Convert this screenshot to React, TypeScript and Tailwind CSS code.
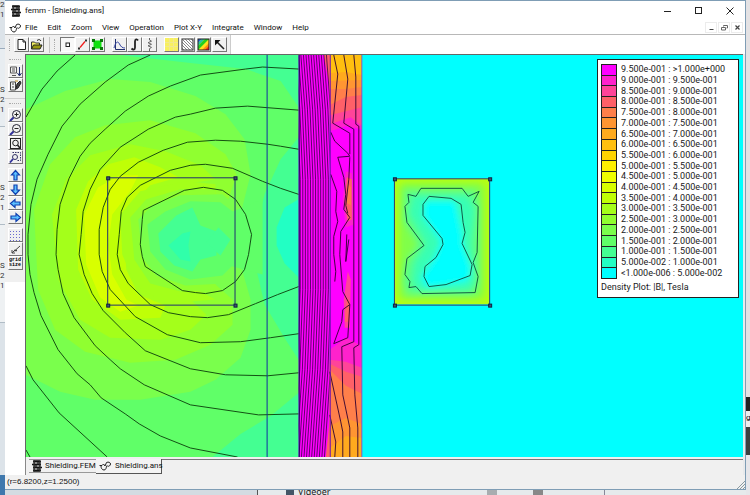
import React from "react";

type Pt = string;

const MENUS = ["File", "Edit", "Zoom", "View", "Operation", "Plot X-Y", "Integrate", "Window", "Help"];

const LEGEND: { color: string; label: string }[] = [
  { color: "#ff00ff", label: "9.500e-001 : >1.000e+000" },
  { color: "#ff22cc", label: "9.000e-001 : 9.500e-001" },
  { color: "#ff4499", label: "8.500e-001 : 9.000e-001" },
  { color: "#ff6068", label: "8.000e-001 : 8.500e-001" },
  { color: "#ff7f4a", label: "7.500e-001 : 8.000e-001" },
  { color: "#ff9532", label: "7.000e-001 : 7.500e-001" },
  { color: "#ffaa1e", label: "6.500e-001 : 7.000e-001" },
  { color: "#ffbf10", label: "6.000e-001 : 6.500e-001" },
  { color: "#ffd400", label: "5.500e-001 : 6.000e-001" },
  { color: "#fff000", label: "5.000e-001 : 5.500e-001" },
  { color: "#f0ff00", label: "4.500e-001 : 5.000e-001" },
  { color: "#d8ff00", label: "4.000e-001 : 4.500e-001" },
  { color: "#bfff06", label: "3.500e-001 : 4.000e-001" },
  { color: "#a4ff1a", label: "3.000e-001 : 3.500e-001" },
  { color: "#90ff30", label: "2.500e-001 : 3.000e-001" },
  { color: "#7aff4c", label: "2.000e-001 : 2.500e-001" },
  { color: "#60ff68", label: "1.500e-001 : 2.000e-001" },
  { color: "#44ff92", label: "1.000e-001 : 1.500e-001" },
  { color: "#22ffc4", label: "5.000e-002 : 1.000e-001" },
  { color: "#00ffff", label: "<1.000e-006 : 5.000e-002" },
];

const COIL_BANDS: { color: string; pts: Pt }[] = [
  { color: "#44ff92", pts: "26,56 298,56 298,457 26,457" },
  { color: "#60ff68", pts: "26,56 120,56 190,64 245,70 280,82 298,108 298,138 280,160 264,195 256,225 254,262 264,305 285,340 298,360 298,393 270,416 240,434 212,457 26,457" },
  { color: "#7aff4c", pts: "26,110 65,92 110,80 150,83 195,97 225,115 244,140 250,175 240,215 240,265 250,300 250,330 240,358 215,380 190,392 140,400 95,400 60,392 26,375" },
  { color: "#90ff30", pts: "34,210 50,165 75,138 105,126 150,121 195,134 225,155 236,175 228,200 215,200 190,205 180,280 215,285 232,300 232,325 210,345 175,360 130,363 85,352 55,330 38,290" },
  { color: "#a4ff1a", pts: "52,215 66,180 90,156 130,145 165,152 200,166 215,180 190,184 150,192 150,290 190,300 206,315 190,330 160,340 110,338 80,320 58,280" },
  { color: "#bfff06", pts: "76,210 88,182 108,165 134,158 160,168 178,178 150,186 132,205 124,235 126,270 138,295 165,306 160,318 120,320 92,300 78,270" },
  { color: "#d8ff00", pts: "84,215 98,188 120,176 138,176 130,192 112,215 108,245 112,275 126,300 138,306 120,312 100,298 86,265" },
  { color: "#a4ff1a", pts: "120,215 140,192 185,182 215,185 215,195 180,198 150,215 148,265 160,285 200,292 215,300 165,304 135,285 122,255" },
  { color: "#90ff30", pts: "130,218 146,200 180,190 215,190 215,290 180,292 150,284 134,260" },
  { color: "#7aff4c", pts: "138,220 152,206 180,196 222,195 240,210 240,268 225,284 185,286 156,276 142,258" },
  { color: "#60ff68", pts: "147,225 165,212 190,202 220,203 236,215 236,262 222,276 190,280 165,270 150,252" },
  { color: "#60ff68", pts: "225,215 262,200 262,275 225,265" },
  { color: "#44ff92", pts: "158,234 176,216 192,208 200,226 216,232 216,256 200,260 192,272 174,266 160,252" },
  { color: "#30ffaa", pts: "168,246 182,234 190,232 188,246 190,262 180,260" },
  { color: "#44ff92", pts: "218,228 230,240 220,256 206,243" },
  { color: "#22ffc4", pts: "298,200 284,208 276,228 276,246 284,264 298,278" },
];

const FLUX_LINES: Pt[] = [
  "26,118 42,90 57,72 75,56",
  "150,56 128,66 105,83 80,105 62,127 48,155 37,180 31,205 28,235 28,255 30,275 34,293 41,316 58,350 77,374 90,385 101,398 125,414 139,424 160,436 190,448 237,457",
  "298,70 262,68 245,70 200,76 170,87 148,97 125,112 105,130 90,144 80,157 69,179 60,205 57,230 56,255 58,270 63,294 74,318 95,346 110,360 120,369 144,385 190,405 258,415 298,414",
  "298,111 247,107 215,109 190,115 175,118 148,130 120,148 100,170 90,190 83,212 81,235 79,255 84,275 92,294 103,311 125,333 145,351 190,369 225,375 267,376 298,373",
  "298,150 280,147 267,145 240,142 215,141 187,143 163,151 138,163 120,177 110,190 103,208 99,230 99,255 102,272 110,290 135,317 167,335 200,343 240,342 270,338 298,334",
  "298,195 280,189 262,182 232,169 205,165 190,166 170,171 140,186 127,198 121,212 119,235 117,255 120,270 128,284 150,305 168,313 190,317 207,318 228,315 255,304 277,295 298,287",
  "203,188 184,191 143,211 142,220 140,245 142,257 145,267 182,291 195,293 205,294 222,291 235,282 244,270 248,255 251,235 245,215 235,200 222,191 203,188",
  "26,366 33,380 59,413 107,457",
  "26,450 30,457",
];

const SHIELD_BANDS: { color: string; pts: Pt }[] = [
  { color: "#ff00ff", pts: "329,56 361,56 361,457 329,457" },
  { color: "#ff22cc", pts: "329,56 361,56 361,130 345,127 329,132" },
  { color: "#ff4499", pts: "329,56 361,56 361,127 350,118 329,125" },
  { color: "#ff6068", pts: "329,56 361,56 361,108 345,112 329,116" },
  { color: "#ff7f4a", pts: "329,56 361,56 361,96 345,98 329,106" },
  { color: "#ff9532", pts: "329,56 361,56 361,88 345,90 329,90" },
  { color: "#ffaa1e", pts: "329,56 361,56 361,81 329,82" },
  { color: "#ffbf10", pts: "329,56 361,56 361,76 345,73 329,74" },
  { color: "#ff22cc", pts: "329,350 345,338 361,346 361,457 329,457" },
  { color: "#ff4499", pts: "329,360 345,362 361,368 361,457 329,457" },
  { color: "#ff6068", pts: "329,364 345,372 361,377 361,457 329,457" },
  { color: "#ff7f4a", pts: "329,370 345,386 361,394 361,457 329,457" },
  { color: "#ff9532", pts: "329,426 345,418 361,424 361,457 329,457" },
  { color: "#ffaa1e", pts: "329,448 345,436 361,438 361,457 329,457" },
  { color: "#ff22cc", pts: "345,172 351,174 353,225 345,228 342,200" },
  { color: "#ff6068", pts: "346,178 351,180 351,220 347,222 344,205" },
  { color: "#ff7f4a", pts: "347,184 350,188 350,206 346,204" },
  { color: "#ff4499", pts: "347,272 350,280 349,328 344,328 343,300" },
  { color: "#ff6068", pts: "346,298 349,302 348,322 344,322" },
  { color: "#ff6068", pts: "323,56 329,56 329,88" },
  { color: "#ff6068", pts: "325,457 329,420 329,457" },
];

const SHIELD_LINES: Pt[] = [
  "333,56 337,75 332,124 349,134 349,155",
  "343,56 347,80 343,124 353,130 353,342 341,347 342,395 349,428 349,457",
  "353,56 355,78 355,125 358,127 358,345 353,348 354,395 357,428 357,457",
  "330,133 334,142 347,154 349,157 337,158 343,178 345,195 343,210 349,218 340,232 339,255 342,292 349,305 342,310 341,322 333,344 347,338 349,305",
  "349,158 348,180 345,206 347,214",
  "330,175 336,192 335,212 337,222 333,237 333,255 335,272 334,282",
  "346,235 345,262 348,240",
  "329,372 340,422 342,432 342,457",
  "329,415 335,442 334,457",
];

const WALL_LINES: Pt[] = Array.from({ length: 15 }, (_, i) => {
  const x = 297 + i * 2.55;
  return `${x - 7},56 ${x - 3},110 ${x},180 ${x},290 ${x - 3},370 ${x - 9},457`;
});

const CORNERS: [number, number][] = [
  [107, 178], [234, 178], [107, 305], [234, 305],
  [393, 179], [488, 179], [393, 305], [488, 305],
];

function FieldPlot() {
  return (
    <svg
      className="block h-full w-full"
      viewBox="26 56 717 401"
      preserveAspectRatio="xMinYMin slice"
      role="img"
      aria-label="Flux density plot"
    >
      <defs>
        <clipPath id="wall"><rect x="298" y="56" width="31" height="401" /></clipPath>
        <clipPath id="target"><rect x="393" y="179" width="95" height="126" /></clipPath>
        <filter id="soft"><feGaussianBlur stdDeviation="3" /></filter>
      </defs>
      <rect x="26" y="56" width="717" height="401" fill="#00ffff" />
      {COIL_BANDS.map((b, i) => <polygon key={i} points={b.pts} fill={b.color} />)}
      <g fill="none" stroke="#0a3c0a" strokeWidth="0.9">
        {FLUX_LINES.map((p) => <polyline key={p} points={p} />)}
      </g>
      <path d="M266.5 56V457" stroke="#1030a0" />
      <rect x="107.5" y="178.5" width="127" height="127" fill="none" stroke="#203070" />

      <rect x="298" y="56" width="31" height="401" fill="#ff00ff" />
      {SHIELD_BANDS.map((b, i) => <polygon key={i} points={b.pts} fill={b.color} />)}
      <g clipPath="url(#wall)" fill="none" stroke="#3a0048" strokeWidth="0.8">
        {WALL_LINES.map((p) => <polyline key={p} points={p} />)}
      </g>
      <g fill="none" stroke="#300030" strokeWidth="0.9">
        {SHIELD_LINES.map((p) => <polyline key={p} points={p} />)}
      </g>
      <path d="M298.5 56V457" stroke="#180060" />
      <path d="M329.5 56V457" stroke="#7010b0" />
      <path d="M361 56V457" stroke="#8060c0" />

      <g clipPath="url(#target)">
        <rect x="393" y="179" width="95" height="126" fill="#b4ff14" />
        <g filter="url(#soft)">
          <rect x="398" y="184" width="85" height="116" rx="6" fill="#80ff48" />
          <path d="M404 191h70l4 14v80l-5 10h-66l-5-12 3-20 12-18-14-24z" fill="#58ff84" />
          <path d="M412 196h54l8 14-4 34 4 38-6 9h-52l-5-9 2-18 12-20-17-30z" fill="#38ffb4" />
          <path d="M424 202h30l7 34v8l9 26-4 12-40 6-6-10 14-20 6-16-18-26z" fill="#00ffff" />
        </g>
      </g>
      <g fill="none" stroke="#0a4a3a" strokeWidth="0.9">
        <polygon points="420,189 461,189 467,197 478,192 472,203 477,207 476,253 472,263 477,277 474,293 421,294 415,287 408,288 409,282 404,275 406,259 423,246 406,223 404,207 408,203 407,195 415,197" />
        <polygon points="428,197 450,199 460,205 462,223 464,233 461,244 471,265 469,276 445,285 428,287 423,277 424,267 435,258 442,245 441,239 422,216 422,205" />
      </g>
      <rect x="393.5" y="179.5" width="95" height="126" fill="none" stroke="#303870" />
      {CORNERS.map(([x, y]) => (
        <rect key={`${x}-${y}`} x={x - 0.5} y={y - 0.5} width="3" height="3" fill="#405070" stroke="#102040" />
      ))}
    </svg>
  );
}

function Svg({ children, size = "size-[13px]" }: { children: React.ReactNode; size?: string }) {
  return (
    <svg viewBox="0 0 13 13" className={`block shrink-0 ${size}`} fill="none" stroke="#222" strokeWidth="1" aria-hidden="true">
      {children}
    </svg>
  );
}

function ToolButton({ name, pressed = false, children }: { name: string; pressed?: boolean; children: React.ReactNode }) {
  return (
    <button
      type="button"
      aria-label={name}
      title={name}
      className={
        pressed
          ? "flex h-[15px] w-[15px] items-center justify-center overflow-hidden border border-t-[#777] border-l-[#777] border-r-white border-b-white bg-[#f8f8f8]"
          : "flex h-[15px] w-[15px] items-center justify-center overflow-hidden border border-t-white border-l-white border-r-[#777] border-b-[#777] bg-[#f0f0f0]"
      }
    >
      {children}
    </button>
  );
}

function SideButton({ name, children }: { name: string; children: React.ReactNode }) {
  return (
    <button
      type="button"
      aria-label={name}
      title={name}
      className="flex h-[14px] w-[15px] items-center justify-center overflow-hidden border border-t-white border-l-white border-r-[#777] border-b-[#777] bg-[#f0f0f0]"
    >
      {children}
    </button>
  );
}

function FemmIcon() {
  return (
    <svg viewBox="0 0 10 12" className="block h-3 w-[10px] shrink-0" aria-hidden="true">
      <rect x="1.5" y="0" width="7" height="12" fill="#555" />
      <path d="M1 1.500h8M0 4.500h9M1 7.500h9M1 10.500h8" stroke="#111" strokeWidth="1.500" />
      <path d="M3 3h2M5 6h2M3 9h2" stroke="#ccc" />
      <path d="M2 0v12M8 1v10" stroke="#333" />
    </svg>
  );
}

function AnsIcon() {
  return (
    <svg viewBox="0 0 12 10" className="block h-[10px] w-3 shrink-0" fill="none" stroke="#222" strokeWidth="1" aria-hidden="true">
      <path d="M.5 4.500h2.500l1.500-1.500M2 5c0 2 1 4 3 4s2-2 3-4.500" />
      <path d="M4.500 3l1.500 2 1.500-3.500c2-1 4 0 4 1.500S9.500 6 8.500 5" />
    </svg>
  );
}

function Magnifier({ children }: { children?: React.ReactNode }) {
  return (
    <Svg>
      <circle cx="7.5" cy="5.5" r="4" stroke="#223" />
      <path d="M4.500 8.500L1 12" stroke="#30309a" strokeWidth="2" />
      {children}
    </Svg>
  );
}

function BlueArrow({ turn }: { turn: string }) {
  return (
    <svg viewBox="0 0 13 13" className={`block size-[13px] shrink-0 ${turn}`} aria-hidden="true">
      <path d="M6.500 1.500l4 4.500H8v5H5V6H2.500z" fill="#5cc0ff" stroke="#1040b0" strokeWidth="1.2" />
    </svg>
  );
}

function TopToolbar() {
  return (
    <div className="flex h-5 shrink-0 border-t border-[#b8b8b8] bg-white">
      <div className="flex items-center border-r border-[#ccc] bg-[#f0f0f0] pr-[3px]" role="toolbar" aria-label="Main tools">
        <span className="mr-[3px] ml-1 h-3 w-[2px] border-l border-dotted border-[#aaa]" />
        <div className="flex">
          <ToolButton name="New">
            <Svg><path d="M3 1.500h5l2.500 2.500v7.500H3zM8 1.500V4h2.500" fill="#fff" /></Svg>
          </ToolButton>
          <ToolButton name="Open">
            <Svg>
              <path d="M1.500 11V4h3l1 1h4v2" fill="#f4f060" stroke="#333" />
              <path d="M1.500 11l2-4H12l-2 4z" fill="#9a9a10" stroke="#222" />
              <path d="M7 2.500c2-1.500 3-1 4 .5" />
            </Svg>
          </ToolButton>
        </div>
        <span className="ml-[5px] h-4 w-[2px] border-l border-[#c4c4c4]" />
        <span className="mr-[4px] ml-[3px] h-3 w-[2px] border-l border-dotted border-[#aaa]" />
        <div className="flex">
          <ToolButton name="Point values" pressed>
            <Svg><rect x="5" y="5" width="3.5" height="3.5" fill="#fff" /></Svg>
          </ToolButton>
          <ToolButton name="Contours">
            <Svg>
              <path d="M4 9.500l5-6" stroke="#f01818" strokeWidth="1.200" />
              <rect x="2" y="9.5" width="2" height="2" fill="#333" stroke="none" />
              <rect x="9" y="1.5" width="2" height="2" fill="#333" stroke="none" />
            </Svg>
          </ToolButton>
          <ToolButton name="Areas">
            <Svg>
              <rect x="2.5" y="2.5" width="8" height="8" fill="#10e010" stroke="none" />
              <path d="M1 1h3v3H1zM9 1h3v3H9zM1 9h3v3H1zM9 9h3v3H9z" fill="#087808" stroke="none" />
            </Svg>
          </ToolButton>
        </div>
        <div className="ml-[7px] flex">
          <ToolButton name="Plot">
            <Svg><path d="M2.500 1v10.500H12" stroke="#223070" /><path d="M1 10C3 3 5 3 6.500 6s3 4 5.500 4" stroke="#3040a0" /></Svg>
          </ToolButton>
          <ToolButton name="Line integral">
            <Svg><path d="M10 2.500C9 .8 7 1 7 3.500v6c0 2.500-2 2.500-3.500 1" strokeWidth="1.800" /></Svg>
          </ToolButton>
          <ToolButton name="Circuit properties">
            <Svg><path d="M6.500 0v2l2 1.200-3.500 1.500 3.500 1.600-3.500 1.500 3.500 1.600-2 1.200V13" stroke="#666" /></Svg>
          </ToolButton>
        </div>
        <div className="ml-[7px] flex gap-px">
          <ToolButton name="Contour plot">
            <Svg><rect width="13" height="13" fill="#f8f060" stroke="none" /><path d="M0 4.500h13M0 8.500h13M4.500 0v13M8.500 0v13" stroke="#f0e890" /></Svg>
          </ToolButton>
          <ToolButton name="Hatch plot">
            <Svg><rect x="1" y="1" width="11" height="11" fill="#fff" stroke="#333" /><path d="M1 4l8 8M1 7l5 5M1 10l2 2M1 1l11 11M4 1l8 8M7 1l5 5M10 1l2 2" stroke="#555" strokeWidth="0.700" /></Svg>
          </ToolButton>
          <ToolButton name="Density plot">
            <Svg>
              <rect x="1" y="1" width="11" height="11" fill="#ffe020" stroke="none" />
              <path d="M1 1h4L1 5z" fill="#2060e0" stroke="none" />
              <path d="M5 1h3L1 8V5z" fill="#20c8a0" stroke="none" />
              <path d="M8 1h4L1 12V8z" fill="#20d020" stroke="none" />
              <path d="M12 5v4l-3 3H5z" fill="#ff9010" stroke="none" />
              <path d="M12 8v4H8z" fill="#f02020" stroke="none" />
              <rect x="1" y="1" width="11" height="11" stroke="#222" />
            </Svg>
          </ToolButton>
          <ToolButton name="Vector plot">
            <Svg><path d="M11 11L4 4" strokeWidth="1.600" /><path d="M2 2h5.500L2 7.500z" fill="#111" stroke="none" /></Svg>
          </ToolButton>
        </div>
      </div>
    </div>
  );
}

function SideToolbar() {
  return (
    <div className="flex w-5 shrink-0 flex-col bg-white">
      <div className="flex flex-col items-center bg-[#f0f0f0] pb-3" role="toolbar" aria-label="View tools" aria-orientation="vertical">
        <span className="mt-[5px] mb-1 h-px w-3 border-t border-dotted border-[#aaa]" />
        <SideButton name="Sort">
          <Svg><path d="M1.500 2h6v6h-6zM3 4h3M3 6h3M3 10.500h4" stroke="#555" /><path d="M10.500 2v8M8.500 8l2 3 2-3" stroke="#223070" /></Svg>
        </SideButton>
        <SideButton name="Edit properties">
          <Svg><path d="M1.500 3h5v8h-5zM3 5h2M3 8h2" stroke="#444" /><path d="M7 10l1-5 3-3 1 2-3 5z" fill="#444" /><path d="M6 2h3" stroke="#c09020" /></Svg>
        </SideButton>
        <span className="mt-[6px] w-full border-t border-[#d0d0d0]" />
        <span className="mt-1 mb-1 h-px w-3 border-t border-dotted border-[#aaa]" />
        <SideButton name="Zoom in"><Magnifier><path d="M5.500 5.500h4M7.500 3.500v4" /></Magnifier></SideButton>
        <SideButton name="Zoom out"><Magnifier><path d="M5.500 5.500h4" /></Magnifier></SideButton>
        <SideButton name="Zoom extents">
          <Svg><rect x="1.5" y="1.5" width="10" height="10" /><circle cx="6.5" cy="6" r="2.8" /><path d="M8.500 8l2.500 3" strokeWidth="1.500" /></Svg>
        </SideButton>
        <SideButton name="Zoom window">
          <Svg><path d="M3.500 1.500h8v8h-4" stroke="#336" strokeDasharray="1.500 1" /><circle cx="6" cy="6" r="2.5" stroke="#336" /><path d="M4 8l-3 3.500" stroke="#30309a" strokeWidth="1.800" /></Svg>
        </SideButton>
        <div className="mt-1">
          <SideButton name="Pan up"><BlueArrow turn="rotate-0" /></SideButton>
          <SideButton name="Pan down"><BlueArrow turn="rotate-180" /></SideButton>
          <SideButton name="Pan left"><BlueArrow turn="-rotate-90" /></SideButton>
          <SideButton name="Pan right"><BlueArrow turn="rotate-90" /></SideButton>
        </div>
        <div className="mt-1">
          <SideButton name="Show grid">
            <Svg><path d="M1 2.500h11M1 5.500h11M1 8.500h11M1 11.500h11" stroke="#6a6ad0" strokeDasharray="1 2" /></Svg>
          </SideButton>
          <SideButton name="Snap to grid">
            <Svg><path d="M11 3L6 7.500M3 7v3h3M3 10l3-3" stroke="#444" /><path d="M5 7.500h3" stroke="#444" strokeWidth="1.500" /></Svg>
          </SideButton>
          <SideButton name="Grid size">
            <span className="text-center font-['Liberation_Mono',monospace] text-[5px] leading-[5px] font-bold text-black">grid<br />size</span>
          </SideButton>
        </div>
      </div>
    </div>
  );
}

function Legend() {
  return (
    <div className="absolute top-1 right-1 border border-[#222] bg-white px-[3px] pt-1 pb-1 font-[Roboto,'Noto_Sans',sans-serif] text-[9px] text-[#1a1a1a]">
      <ul className="grid h-[214px] w-[134px] grid-rows-[repeat(20,minmax(0,1fr))] ">
        {LEGEND.map((row) => (
          <li key={row.label} className="flex items-center gap-1">
            <span className="h-full w-4 border-x border-t border-[#222]" style={{ backgroundColor: row.color }} />
            <span className="leading-[10px] whitespace-nowrap">{row.label}</span>
          </li>
        ))}
      </ul>
      <p className="w-[134px] leading-3"><span className="block w-4 border-t border-[#222]" />
        <span className="block pt-[2px]">Density Plot: |B|, Tesla</span>
      </p>
    </div>
  );
}

function WindowControls() {
  return (
    <div className="ml-auto flex items-center">
      <button type="button" aria-label="Minimize" className="flex h-4 w-[30px] items-center justify-center">
        <svg viewBox="0 0 8 8" className="size-2" aria-hidden="true"><path d="M0 4.500h7" stroke="#222" /></svg>
      </button>
      <button type="button" aria-label="Maximize" className="flex h-4 w-[31px] items-center justify-center">
        <svg viewBox="0 0 8 8" className="size-2" aria-hidden="true"><rect x="0.5" y="0.5" width="6" height="6" fill="none" stroke="#222" /></svg>
      </button>
      <button type="button" aria-label="Close" className="flex h-4 w-[31px] items-center justify-center">
        <svg viewBox="0 0 8 8" className="size-2" aria-hidden="true"><path d="M.5.500l7 7M7.500.500l-7 7" stroke="#222" /></svg>
      </button>
    </div>
  );
}

function ChildControls() {
  const cls = "flex h-[11px] w-[12px] items-center justify-center border border-[#ececec] bg-white";
  return (
    <div className="ml-auto flex items-center gap-px pr-[2px]">
      <button type="button" aria-label="Minimize document" className={cls}>
        <svg viewBox="0 0 7 7" className="size-[7px]" aria-hidden="true"><path d="M1.500 5.500h4" stroke="#444" /></svg>
      </button>
      <button type="button" aria-label="Restore document" className={cls}>
        <svg viewBox="0 0 7 7" className="size-[7px]" fill="none" stroke="#666" aria-hidden="true"><path d="M2.500 2.500v-1h4v2.500h-1M.5 3.500h4v2.500h-4z" /></svg>
      </button>
      <button type="button" aria-label="Close document" className={cls}>
        <svg viewBox="0 0 7 7" className="size-[7px]" aria-hidden="true"><path d="M1.500 1.500l4 4M5.500 1.500l-4 4" stroke="#444" strokeWidth="1.200" /></svg>
      </button>
    </div>
  );
}

function LeftDesktop() {
  return (
    <div className="flex w-[5px] shrink-0 flex-col overflow-hidden bg-[#dce3e9] font-[Roboto,'Noto_Sans',sans-serif] text-[8px] leading-[10px] text-[#333]">
      <div className="h-12 shrink-0">2<br />1</div>
      <div className="h-[78px] shrink-0 border-t border-[#9ab] bg-[#e8edf1] pt-9">S<br />2<br />1</div>
      <div className="h-[98px] shrink-0 border-t border-[#b0bcc6] bg-[#eef1f3] pt-14">S<br />2<br />1</div>
      <div className="h-[98px] shrink-0 border-t border-[#b0bcc6] bg-[#eef1f3] pt-9">S<br />2<br />1</div>
      <div className="flex-1 border-t border-[#b0bcc6]" />
      <div className="h-5 shrink-0 bg-[#3f78ad]" />
    </div>
  );
}

function RightDesktop() {
  return (
    <div className="flex w-1 shrink-0 flex-col overflow-hidden bg-[#e4e2e4]">
      <div className="flex-1" />
      <div className="h-[14px] bg-[#222]" />
      <div className="h-4 bg-[#eee] font-[Roboto,'Noto_Sans',sans-serif] text-[8px] leading-[14px] text-black">g</div>
      <div className="h-7 bg-[#3c4040]" />
      <div className="h-10 bg-[#e6e6ea]" />
    </div>
  );
}

function BottomDesktop() {
  return (
    <div className="flex h-[5px] shrink-0 overflow-hidden bg-[#e6eaec]">
      <div className="w-[253px] border-r border-[#555] bg-[#d4dce2]" />
      <div className="flex w-[229px] gap-1 pl-7 font-['Noto_Sans',sans-serif] text-[9px] leading-[5px] text-[#222]">
        <span className="h-full w-2 bg-[#456]" />
        <span className="leading-[4px]">Videoer</span>
      </div>
      <div className="w-[10px] bg-[#a8adb0]" />
      <div className="ml-9 w-[10px] bg-[#888]" />
      <div className="ml-[61px] border-l border-[#889]" />
    </div>
  );
}

export default function App() {
  return (
    <div className="flex h-screen min-h-[440px] w-full overflow-hidden font-[Roboto,'Noto_Sans',sans-serif] text-[8px] text-[#111]">
      <LeftDesktop />
      <div className="flex min-w-0 flex-1 flex-col">
        <main className="flex min-h-0 flex-1 flex-col border-t border-r border-b border-[#7f9db5] bg-white">
          <header className="flex h-5 shrink-0 items-center pl-[6px]">
            <FemmIcon />
            <h1 className="ml-1 text-[8px] leading-3">femm - [Shielding.ans]</h1>
            <WindowControls />
          </header>
          <nav className="flex h-[13px] shrink-0 items-center pl-1" aria-label="Menu">
            <AnsIcon />
            <div className="ml-1 flex gap-[10px]">
              {MENUS.map((m) => (
                <button key={m} type="button" className="leading-3 whitespace-nowrap">{m}</button>
              ))}
            </div>
            <ChildControls />
          </nav>
          <TopToolbar />
          <div className="flex min-h-0 flex-1">
            <SideToolbar />
            <div className="flex min-w-0 flex-1 flex-col border-r-2 border-[#e8eaec]">
              <section className="relative min-h-0 flex-1 border-t border-l border-[#666] bg-[#00ffff]">
                <FieldPlot />
                <Legend />
              </section>
              <div className="flex h-[18px] shrink-0 items-start border-l border-[#888] bg-[#f0f0f0] pt-[2px]" role="tablist">
                <button type="button" role="tab" aria-selected="false" className="ml-[3px] flex h-[14px] w-[67px] items-center gap-[3px] border-t border-b border-[#999] pl-[3px] leading-3 whitespace-nowrap">
                  <FemmIcon />Shielding.FEM
                </button>
                <button type="button" role="tab" aria-selected="true" className="flex h-[15px] w-[66px] items-center gap-1 border-r border-b border-[#555] bg-[#f4f4f4] pl-[3px] leading-3 whitespace-nowrap">
                  <AnsIcon />Shielding.ans
                </button>
                <span className="h-px flex-1 bg-[#777]" />
              </div>
            </div>
          </div>
          <footer className="flex h-[14px] shrink-0 items-center justify-between bg-[#f0f0f0] pl-[2px] font-['Liberation_Sans',sans-serif] leading-3">
            <span>(r=6.8200,z=1.2500)</span>
            <svg viewBox="0 0 8 8" className="size-2 self-end" aria-hidden="true"><path d="M0 8L8 0M3 8l5-5M6 8l2-2" stroke="#8a9aa0" /></svg>
          </footer>
        </main>
        <BottomDesktop />
      </div>
      <RightDesktop />
    </div>
  );
}
